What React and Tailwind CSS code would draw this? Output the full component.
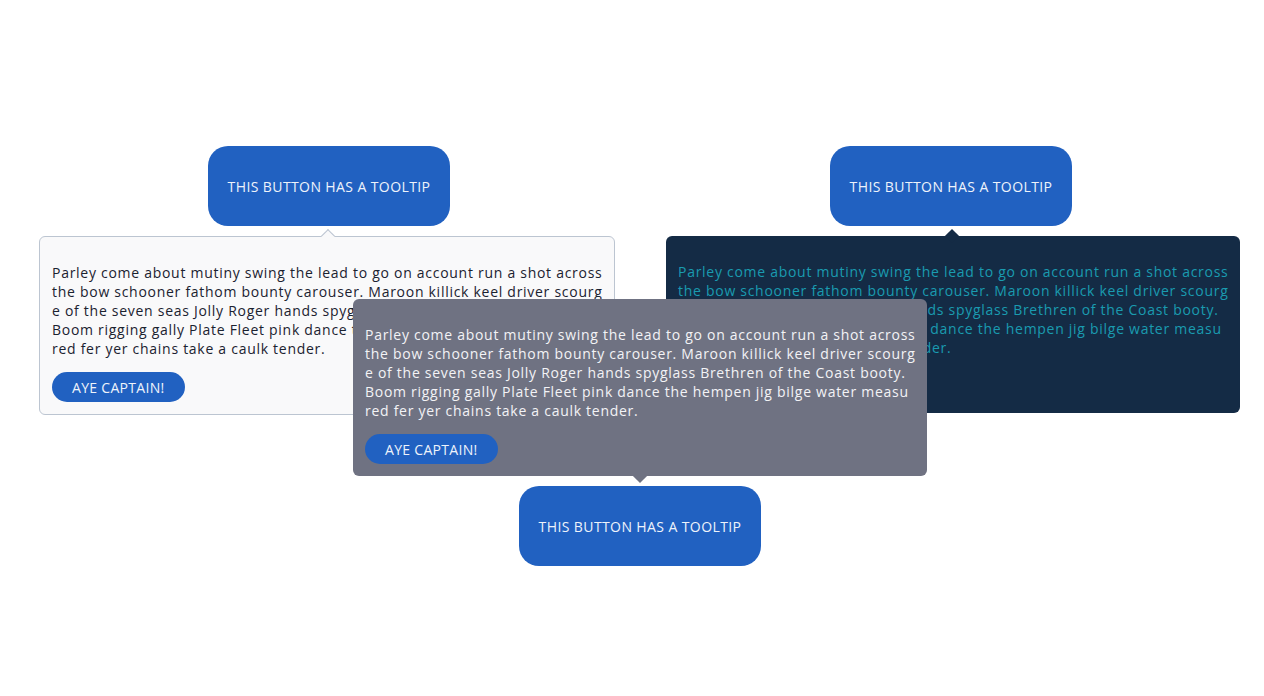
const LINES = [
  'Parley come about mutiny swing the lead to go on account run a shot across',
  'the bow schooner fathom bounty carouser. Maroon killick keel driver scourg',
  'e of the seven seas Jolly Roger hands spyglass Brethren of the Coast booty.',
  'Boom rigging gally Plate Fleet pink dance the hempen jig bilge water measu',
  'red fer yer chains take a caulk tender.',
];

function Copy({ className }) {
  return (
    <p className={`my-[14px] text-[14px] leading-[19px] tracking-[0.72px] ${className}`}>
      {LINES.map((l) => (
        <span key={l} className="block whitespace-nowrap">{l}</span>
      ))}
    </p>
  );
}

function Aye({ hidden }) {
  return (
    <button
      className={`h-[30px] px-5 rounded-full bg-[#2161c1] text-[14px] uppercase tracking-[0.3px] text-[#eef3fb] ${hidden ? 'invisible' : ''}`}
    >
      Aye Captain!
    </button>
  );
}

function MainButton() {
  return (
    <button className="w-[242px] h-[80px] rounded-[20px] bg-[#2161c1] text-[14px] uppercase tracking-[0.4px] text-[#eef3fb]">
      This button has a tooltip
    </button>
  );
}

export default function App() {
  return (
    <div className="min-h-[696px] bg-white font-['Open_Sans',sans-serif] text-left">
      <div className="flex pt-[146px]">
        {/* left: light tooltip */}
        <div className="relative ml-[208px] z-10">
          <MainButton />
          <div className="absolute top-[90px] left-[-169px] w-[576px] rounded-[6px] border border-[#bcc5d1] bg-[#f9f9fa] px-3 py-3">
            <span className="absolute -top-[6px] left-[283px] w-[10px] h-[10px] rotate-45 bg-[#f9f9fa] border-l border-t border-[#bcc5d1]" />
            <Copy className="text-[#1b2230]" />
            <Aye />
          </div>
        </div>

        {/* right: dark tooltip */}
        <div className="relative ml-[380px] z-10">
          <MainButton />
          <div className="absolute top-[90px] left-[-164px] w-[574px] rounded-[6px] bg-[#142b45] px-3 py-3">
            <span className="absolute -top-[5px] left-[281px] w-[10px] h-[10px] rotate-45 bg-[#142b45]" />
            <Copy className="text-[#1a9bb0]" />
            <Aye hidden />
          </div>
        </div>
      </div>

      {/* bottom: gray tooltip above */}
      <div className="flex justify-center pt-[260px] pl-[16px]">
        <div className="relative z-20">
          <MainButton />
          <div className="absolute bottom-[90px] left-[-166px] w-[574px] rounded-[6px] bg-[#6f7282] px-3 py-3">
            <span className="absolute -bottom-[5px] left-[282px] w-[10px] h-[10px] rotate-45 bg-[#6f7282]" />
            <Copy className="text-[#f3f3f6]" />
            <Aye />
          </div>
        </div>
      </div>
    </div>
  );
}
